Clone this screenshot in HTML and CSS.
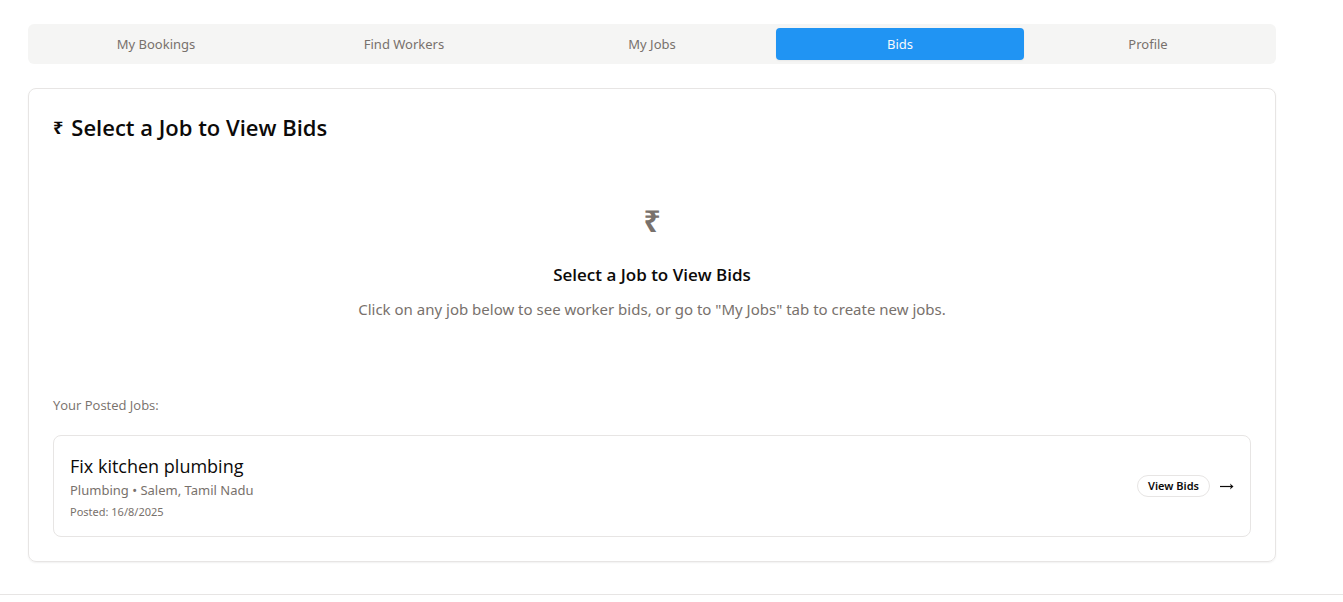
FILE: index.html
```html
<!DOCTYPE html>
<html lang="en">
<head>
<meta charset="utf-8">
<meta name="viewport" content="width=device-width, initial-scale=1">
<title>Bids</title>
<link rel="stylesheet" href="styles.css">
</head>
<body>
<main class="page">
  <nav class="tabs" role="tablist" aria-label="Dashboard">
    <button class="tab" type="button" role="tab">My Bookings</button>
    <button class="tab" type="button" role="tab">Find Workers</button>
    <button class="tab" type="button" role="tab">My Jobs</button>
    <button class="tab tab-active" type="button" role="tab" aria-selected="true">Bids</button>
    <button class="tab" type="button" role="tab">Profile</button>
  </nav>
  <section class="card">
    <h1 class="card-title"><span class="rupee">₹</span><span>Select a Job to View Bids</span></h1>
    <div class="empty">
      <div class="rupee rupee-large">₹</div>
      <h2 class="empty-title">Select a Job to View Bids</h2>
      <p class="empty-text">Click on any job below to see worker bids, or go to "My Jobs" tab to create new jobs.</p>
    </div>
    <h3 class="list-label">Your Posted Jobs:</h3>
    <article class="job">
      <div class="job-info">
        <h4 class="job-title">Fix kitchen plumbing</h4>
        <p class="job-place">Plumbing • Salem, Tamil Nadu</p>
        <p class="job-date">Posted: 16/8/2025</p>
      </div>
      <div class="job-actions">
        <button class="badge" type="button">View Bids</button>
        <svg class="arrow" width="14" height="8" viewBox="0 0 14 8" aria-hidden="true"><path d="M0 4.5H12" fill="none" stroke="currentColor" stroke-width="1.2"/><path d="M10 1.5L13.5 4.5L10 7.5L11 4.5Z" fill="currentColor"/></svg>
      </div>
    </article>
  </section>
</main>
<footer class="footer"></footer>
</body>
</html>
```
FILE: styles.css
```css
* { box-sizing: border-box; }
body {
  margin: 0;
  background: #fff;
  color: #0c0a09;
  font-family: "Noto Sans", "Open Sans", sans-serif;
  font-size: 15px;
  line-height: 24px;
}
h1, h2, h3, h4, p { margin: 0; }
button { font-family: inherit; cursor: pointer; }
.page { padding: 24px 67px 32px 28px; }
.tabs {
  display: grid;
  grid-template-columns: repeat(5, 1fr);
  padding: 4px;
  margin-bottom: 24px;
  border-radius: 6px;
  background: #f5f5f4;
}
.tab {
  height: 32px;
  padding: 0 12px;
  border: 0;
  border-radius: 4px;
  background: transparent;
  color: #78716c;
  font-size: 13px;
  line-height: 20px;
}
.tab-active {
  background: #2094f3;
  color: #f8fafc;
  box-shadow: 0 1px 2px rgba(0, 0, 0, 0.05);
}
.card {
  padding: 24px;
  border: 1px solid #e7e5e4;
  border-radius: 8px;
  box-shadow: 0 1px 2px rgba(0, 0, 0, 0.06);
}
.card-title {
  display: flex;
  align-items: center;
  gap: 8px;
  font-family: "Open Sans", "Noto Sans", sans-serif;
  font-size: 22px;
  font-weight: 600;
  line-height: 28px;
}
.rupee {
  font-family: "Open Sans", "Noto Sans", sans-serif;
  font-size: 18px;
  font-weight: 700;
}
.empty {
  padding: 56px 0;
  text-align: center;
}
.rupee-large {
  color: #78716c;
  font-size: 30px;
  line-height: 48px;
  margin-bottom: 16px;
}
.empty-title {
  margin-bottom: 8px;
  font-family: "Open Sans", "Noto Sans", sans-serif;
  font-size: 17px;
  font-weight: 600;
  line-height: 28px;
}
.empty-text { color: #78716c; }
.list-label {
  margin: 16px 0 18px;
  color: #78716c;
  font-family: "Open Sans", "Noto Sans", sans-serif;
  font-size: 13px;
  font-weight: 400;
  line-height: 24px;
}
.job {
  display: flex;
  align-items: center;
  justify-content: space-between;
  padding: 16px;
  border: 1px solid #e7e5e4;
  border-radius: 8px;
}
.job-title {
  font-family: "Open Sans", "Noto Sans", sans-serif;
  font-size: 18px;
  font-weight: 400;
  line-height: 28px;
}
.job-place {
  margin-bottom: 4px;
  color: #78716c;
  font-size: 13px;
  line-height: 20px;
}
.job-date {
  color: #78716c;
  font-size: 11px;
  line-height: 16px;
}
.job-actions {
  display: flex;
  align-items: center;
  gap: 10px;
}
.badge {
  padding: 2px 10px;
  border: 1px solid #e7e5e4;
  border-radius: 999px;
  background: transparent;
  color: #0c0a09;
  font-size: 11px;
  font-weight: 600;
  line-height: 16px;
}
.footer { border-top: 1px solid #e7e5e4; }
```
